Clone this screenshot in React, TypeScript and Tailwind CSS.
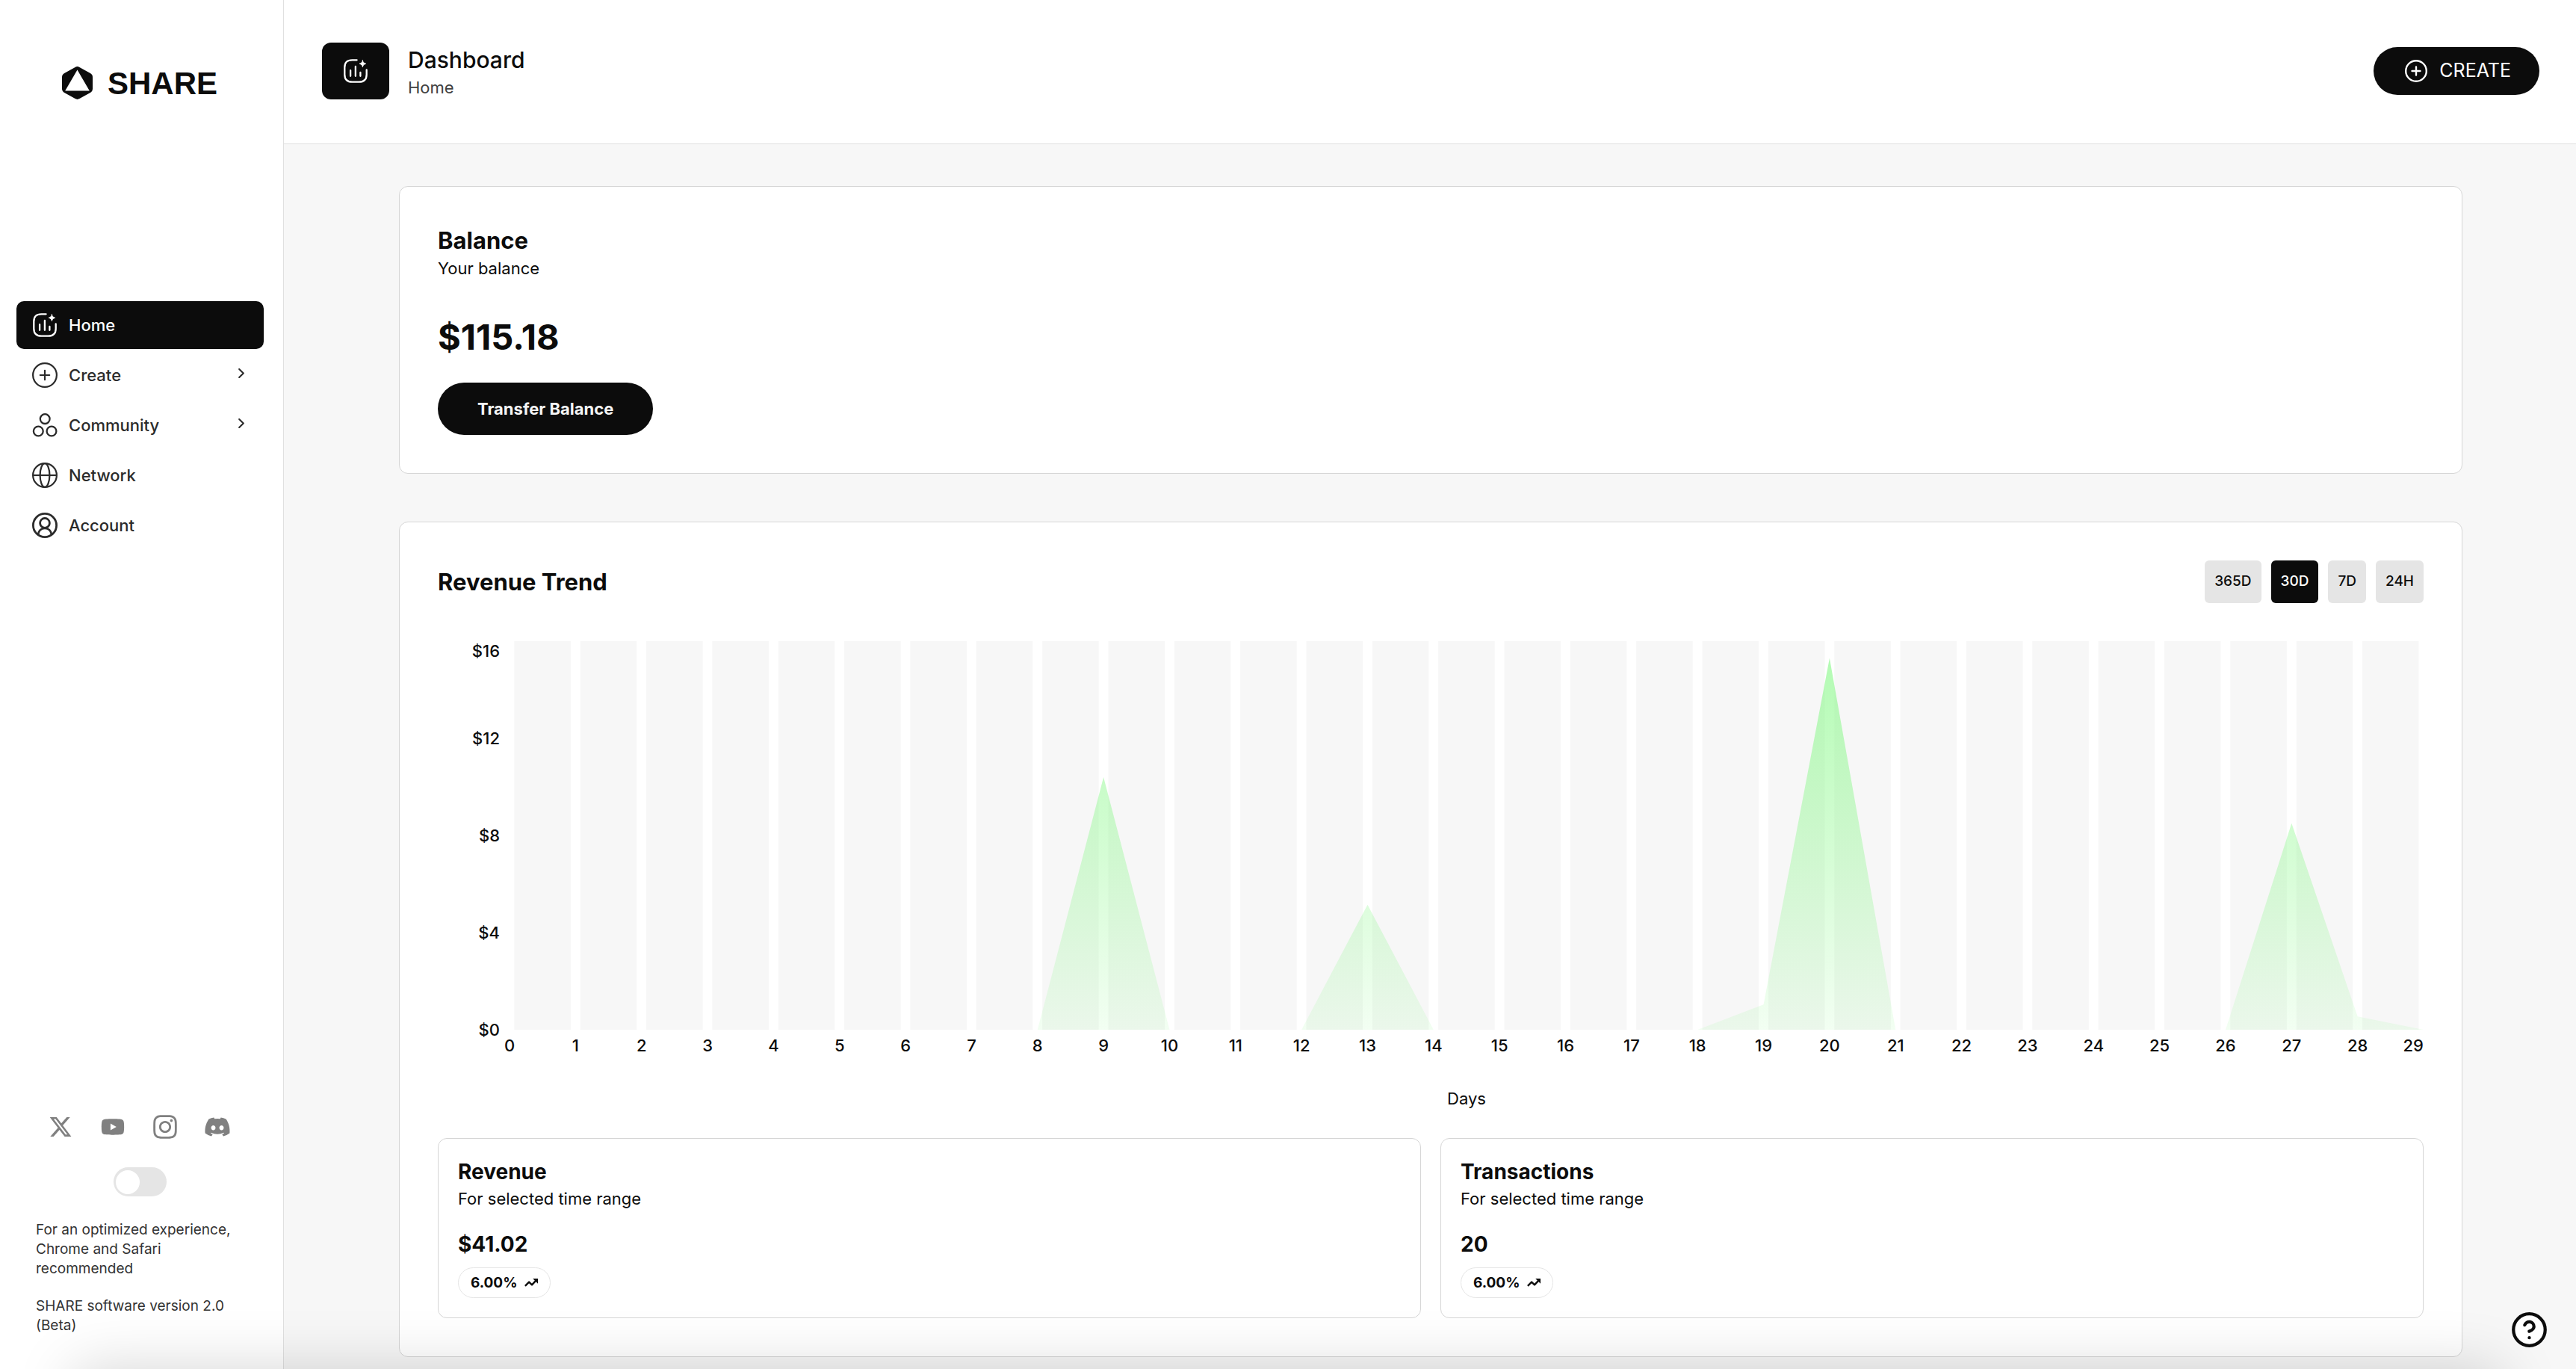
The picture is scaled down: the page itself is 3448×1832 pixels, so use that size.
import { useState } from "react";
import type { ReactNode } from "react";
import { CircleQuestionMark } from "lucide-react";
import { FaDiscord, FaInstagram, FaXTwitter, FaYoutube } from "react-icons/fa6";

function Logo() {
  return (
    <svg className="h-11 w-[41px]" viewBox="0 0 41 44" aria-hidden="true">
      <path
        d="M17.6 .9Q20.5 -.7 23.4 .9L37.9 9Q41 10.8 41 14.2V29.8Q41 33.2 37.9 35L23.4 43.1Q20.5 44.7 17.6 43.1L3.1 35Q0 33.2 0 29.8V14.2Q0 10.8 3.1 9Z"
        fill="#0c0c0c"
      />
      <path d="M20.5 4.5L36.8 32.6H4.2Z" fill="#fff" />
    </svg>
  );
}

function StatsIcon() {
  return (
    <svg className="size-8" viewBox="0 0 32 32" fill="none" stroke="currentColor" strokeWidth="2.3" strokeLinecap="round" aria-hidden="true">
      <path d="M17.6 1.3H11.5C4.6 1.3 1.3 4.6 1.3 11.3V20.7C1.3 27.4 4.6 30.7 11.5 30.7H20.5C27.4 30.7 30.7 27.4 30.7 20.7V14.4" />
      <path d="M9.1 15.2V22.8M15.9 10V22.8M22.4 18V22.8" />
      <path
        d="M25.4 1.8C25.9 4.4 27 5.6 29.8 6.3C27 7 25.9 8.2 25.4 10.8C24.9 8.2 23.8 7 21 6.3C23.8 5.6 24.9 4.4 25.4 1.8Z"
        fill="currentColor"
        strokeWidth="0.8"
        strokeLinejoin="round"
      />
    </svg>
  );
}

function PlusCircle({ className, stroke }: { className: string; stroke: number }) {
  return (
    <svg className={className} viewBox="0 0 34 34" fill="none" stroke="currentColor" strokeWidth={stroke} strokeLinecap="round" aria-hidden="true">
      <circle cx="17" cy="17" r={17 - stroke / 2} />
      <path d="M17 10.8V23.2M10.8 17H23.2" />
    </svg>
  );
}

function CommunityIcon() {
  return (
    <svg className="size-[34px]" viewBox="0 0 34 34" fill="none" stroke="currentColor" strokeWidth="2.3" aria-hidden="true">
      <circle cx="17.2" cy="8.6" r="6.4" />
      <circle cx="8.3" cy="25" r="6.4" />
      <circle cx="26" cy="25" r="6.4" />
    </svg>
  );
}

function GlobeIcon() {
  return (
    <svg className="size-[34px]" viewBox="0 0 34 34" fill="none" stroke="currentColor" strokeWidth="2.2" aria-hidden="true">
      <circle cx="17" cy="17" r="15.9" />
      <ellipse cx="17" cy="17" rx="6.4" ry="15.9" />
      <path d="M1 17H33" />
    </svg>
  );
}

function AccountIcon() {
  return (
    <svg className="size-[34px]" viewBox="0 0 34 34" fill="none" stroke="currentColor" strokeWidth="2.8" aria-hidden="true">
      <circle cx="17" cy="17" r="15.6" />
      <circle cx="17" cy="13.9" r="6.4" />
      <path d="M7.8 29.6C8.6 24.2 12.2 20.9 17 20.9S25.4 24.2 26.2 29.6" />
    </svg>
  );
}

function Chevron() {
  return (
    <svg className="mb-1.5 h-[13px] w-2" viewBox="0 0 8 13" fill="none" stroke="currentColor" strokeWidth="2.1" strokeLinecap="round" strokeLinejoin="round" aria-hidden="true">
      <path d="M1.2 1L6.8 6.5L1.2 12" />
    </svg>
  );
}

function TrendIcon() {
  return (
    <svg className="mb-0.5 h-[11px] w-[18px]" viewBox="0 0 18 11" fill="none" stroke="currentColor" strokeWidth="2.4" aria-hidden="true">
      <path d="M0.9 9.8L6.1 4.6L10 8.3L15.6 2.4" strokeLinejoin="round" />
      <path d="M11.2 0H18V6.8Z" fill="currentColor" stroke="none" />
    </svg>
  );
}

type NavItem = { label: string; icon: ReactNode; active?: boolean; nested?: boolean };

const navItems: NavItem[] = [
  { label: "Home", icon: <StatsIcon />, active: true },
  { label: "Create", icon: <PlusCircle className="size-[34px]" stroke={2.2} />, nested: true },
  { label: "Community", icon: <CommunityIcon />, nested: true },
  { label: "Network", icon: <GlobeIcon /> },
  { label: "Account", icon: <AccountIcon /> },
];

const socials = [
  { label: "X", icon: <FaXTwitter size={32} /> },
  { label: "YouTube", icon: <FaYoutube size={32} /> },
  { label: "Instagram", icon: <FaInstagram size={36} /> },
  { label: "Discord", icon: <FaDiscord size={36} /> },
];

function Sidebar() {
  const [dark, setDark] = useState(false);
  return (
    <aside className="flex w-[380px] shrink-0 flex-col border-r border-[#e0e0e0] bg-white pt-[89px] pr-[26px] pb-[45px] pl-[22px]">
      <a href="#" className="flex h-11 items-center gap-5 pl-[61px] font-['Liberation_Sans',Arial,sans-serif] text-[42px] leading-[44px] font-bold">
        <Logo />
        <span className="pt-0.5">SHARE</span>
      </a>
      <nav className="mt-[270px] flex flex-col gap-[3px]">
        {navItems.map((item) => (
          <a
            key={item.label}
            href="#"
            className={
              item.active
                ? "flex h-16 items-center gap-[15px] rounded-[10px] bg-[#0c0c0c] pr-[26px] pl-[21px] text-[22px] font-medium text-white"
                : "flex h-16 items-center gap-[15px] rounded-[10px] pr-[26px] pl-[21px] text-[22px] font-medium text-[#2b2b2b]"
            }
          >
            <span className="flex size-[34px] items-center justify-center">{item.icon}</span>
            <span className="flex-1">{item.label}</span>
            {item.nested && <Chevron />}
          </a>
        ))}
      </nav>
      <div className="mt-auto flex justify-center gap-[34px] pr-1 text-[#808080]">
        {socials.map((s) => (
          <a key={s.label} href="#" aria-label={s.label} className="flex size-9 items-center justify-center">
            {s.icon}
          </a>
        ))}
      </div>
      <input
        type="checkbox"
        role="switch"
        aria-label="Dark mode"
        checked={dark}
        onChange={(e) => setDark(e.target.checked)}
        className="mt-9 flex h-[39px] w-[71px] appearance-none items-center self-center rounded-full bg-[#e5e5e5] px-[3px] before:block before:size-8 before:rounded-full before:bg-white checked:justify-end checked:bg-[#0c0c0c]"
      />
      <div className="mt-8 flex flex-col gap-6 px-[26px] text-[19px] leading-[26px] text-[#333]">
        <p>For an optimized experience, Chrome and Safari recommended</p>
        <p>SHARE software version 2.0 (Beta)</p>
      </div>
    </aside>
  );
}

function Header() {
  return (
    <header className="flex h-[193px] items-center justify-between border-b border-[#dfdfdf] bg-white pr-[49px] pb-0.5 pl-[51px]">
      <div className="flex items-center gap-[25px]">
        <div className="flex h-[76px] w-[90px] items-center justify-center rounded-xl bg-[#0c0c0c] text-white">
          <StatsIcon />
        </div>
        <div>
          <h1 className="text-[30px] leading-[44px] font-medium">Dashboard</h1>
          <p className="text-[22px] leading-[30px] text-[#404040]">Home</p>
        </div>
      </div>
      <button type="button" className="flex h-16 items-center gap-4 rounded-full bg-[#0c0c0c] pr-[38px] pl-[42px] text-[25px] text-white">
        <PlusCircle className="size-[30px]" stroke={2.7} />
        CREATE
      </button>
    </header>
  );
}

function BalanceCard() {
  return (
    <section className="rounded-xl border border-[#d6d6d6] bg-white p-[51px]">
      <h2 className="text-[31px] leading-[42px] font-bold">Balance</h2>
      <p className="text-[22px] leading-8">Your balance</p>
      <p className="mt-[50px] text-[47px] leading-[52px] font-bold">$115.18</p>
      <button type="button" className="mt-[35px] h-[70px] rounded-full bg-[#0c0c0c] px-[53px] text-[22px] font-bold text-[#f5f5f5]">
        Transfer Balance
      </button>
    </section>
  );
}

const ranges = ["365D", "30D", "7D", "24H"];
const priceTicks = ["$16", "$12", "$8", "$4", "$0"];
const revenue = [
  0, 0, 0, 0, 0, 0, 0, 0, 0, 10.4, 0, 0, 0, 5.15, 0, 0, 0, 0, 0, 1.04, 15.3, 0, 0, 0, 0, 0, 0, 8.5, 0.55, 0,
];

const CHART_W = 2900;
const CHART_H = 520;
const STEP = CHART_W / (revenue.length - 1);

function RevenueChart() {
  const line = revenue.map((v, i) => `L${i * STEP} ${CHART_H - (v / 16) * CHART_H}`).join("");
  return (
    <svg className="block h-[520px] w-full" viewBox={`0 0 ${CHART_W} ${CHART_H}`} preserveAspectRatio="none" role="img" aria-label="Revenue per day">
      <defs>
        <linearGradient id="area" x1="0" y1="0" x2="0" y2="1">
          <stop offset="0" stopColor="#7df87d" stopOpacity="0.58" />
          <stop offset="1" stopColor="#7df87d" stopOpacity="0.1" />
        </linearGradient>
      </defs>
      {revenue.slice(1).map((_, i) => (
        <rect key={i} x={i * STEP + 7.2} y="0" width={STEP - 14.5} height={CHART_H} fill="#f7f7f7" />
      ))}
      <path d={`M0 ${CHART_H}${line}L${CHART_W} ${CHART_H}Z`} fill="url(#area)" />
    </svg>
  );
}

function StatCard({ title, value }: { title: string; value: string }) {
  return (
    <div className="flex flex-col items-start rounded-xl border border-[#d6d6d6] bg-white p-[26px]">
      <h3 className="text-[28px] leading-9 font-bold">{title}</h3>
      <p className="text-[22px] leading-9">For selected time range</p>
      <p className="mt-[25px] text-[28px] leading-9 font-bold">{value}</p>
      <div className="mt-[13px] flex h-[41px] items-center gap-2.5 rounded-full border border-[#e5e5e5] pt-px pr-4 pl-4 text-[19px] font-bold">
        6.00%
        <TrendIcon />
      </div>
    </div>
  );
}

function RevenueCard() {
  const [range, setRange] = useState("30D");
  return (
    <section className="rounded-xl border border-[#d6d6d6] bg-white p-[51px]">
      <div className="flex items-center justify-between">
        <h2 className="text-[31px] leading-[42px] font-bold">Revenue Trend</h2>
        <div className="flex gap-[13px]">
          {ranges.map((r) => (
            <button
              key={r}
              type="button"
              onClick={() => setRange(r)}
              className={
                r === range
                  ? "h-[57px] rounded-md bg-[#0c0c0c] px-[13px] text-[19px] font-medium text-white"
                  : "h-[57px] rounded-md bg-[#e5e5e5] px-[13px] text-[19px] font-medium"
              }
            >
              {r}
            </button>
          ))}
        </div>
      </div>
      <div className="mt-[51px] flex gap-[13px]">
        <div className="flex h-[520px] w-[83px] flex-col justify-between text-[22px] leading-[26px] font-medium">
          {priceTicks.map((t) => (
            <span key={t} className="flex h-0 items-center justify-end first:items-start">
              {t}
            </span>
          ))}
        </div>
        <div className="flex-1">
          <RevenueChart />
          <div className="mt-1.5 flex h-[30px] justify-between text-[22px] leading-[30px] font-medium">
            {revenue.map((_, i) => (
              <span key={i} className="flex w-0 justify-center last:justify-end">
                {i}
              </span>
            ))}
          </div>
          <p className="mt-[41px] text-center text-[22px] leading-[30px]">Days</p>
        </div>
      </div>
      <div className="mt-[38px] grid grid-cols-2 gap-[26px]">
        <StatCard title="Revenue" value="$41.02" />
        <StatCard title="Transactions" value="20" />
      </div>
    </section>
  );
}

export default function App() {
  return (
    <div className="flex min-h-screen bg-[#f7f7f7] font-['Inter',sans-serif] text-[#0c0c0c]">
      <Sidebar />
      <div className="min-w-0 flex-1">
        <Header />
        <main className="flex flex-col gap-16 pt-14 pr-[152px] pb-4 pl-[154px]">
          <BalanceCard />
          <RevenueCard />
        </main>
      </div>
      <div className="pointer-events-none fixed top-full right-[100px] left-[100px] h-40 shadow-[0_0_80px_rgba(0,0,0,0.17)]" />
      <button type="button" aria-label="Help" className="fixed right-[37px] bottom-[27px]">
        <CircleQuestionMark size={51} className="fill-white" />
      </button>
    </div>
  );
}
